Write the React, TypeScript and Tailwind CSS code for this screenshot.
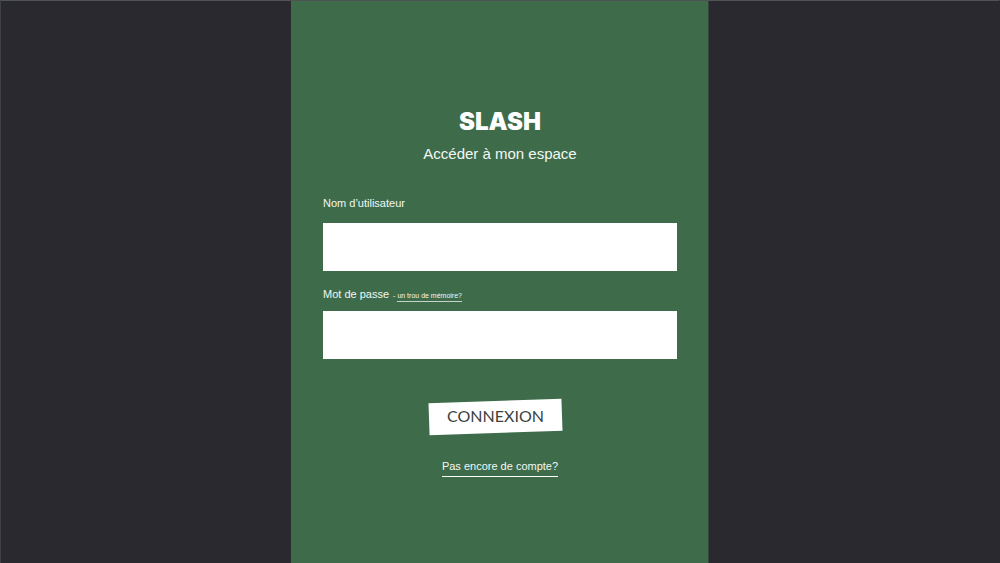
import type { ReactNode } from "react";

type FieldProps = {
  id: string;
  label: string;
  type: "text" | "password";
  className: string;
  children?: ReactNode;
};

function Field({ id, label, type, className, children }: FieldProps) {
  return (
    <div className={`flex flex-col ${className}`}>
      <div className="flex h-4 items-baseline gap-1 leading-4">
        <label htmlFor={id} className="text-[11px]">
          {label}
        </label>
        {children}
      </div>
      <input
        id={id}
        type={type}
        className="h-12 w-full bg-white px-3 text-sm text-[#2a2930] outline-none"
      />
    </div>
  );
}

export default function App() {
  return (
    <div className="flex min-h-screen justify-center border-x border-t border-t-[#4f5356] border-r-[#2a2930] border-l-[#3d4044] bg-[#2a2930] font-['Liberation_Sans',Arial,sans-serif] text-[#f3f7f4]">
      <main className="flex w-full max-w-[418px] flex-col border-x border-l-[#50615a] border-r-[#36453c] bg-[#3e6c4a] px-[31px] pt-[107px] pb-16">
        <h1 className="text-center font-['Inter',sans-serif] text-2xl leading-7 font-black text-white">
          SLASH
        </h1>
        <h2 className="mt-2 text-center text-[15px] leading-5">Accéder à mon espace</h2>
        <form className="mt-[31px] flex flex-col" onSubmit={(e) => e.preventDefault()}>
          <Field id="username" label="Nom d’utilisateur" type="text" className="gap-3" />
          <Field id="password" label="Mot de passe" type="password" className="mt-[15px] gap-[9px]">
            <span className="flex gap-[2px] text-[7px] leading-[10px]">
              <span>-</span>
              <a href="#memoire" className="border-b border-[#c5d3c9]">
                un trou de mémoire?
              </a>
            </span>
          </Field>
          <button
            type="submit"
            className="mt-[42px] mr-[9px] h-8 w-[133px] -rotate-2 self-center bg-white text-[#3c423e]"
          >
            <span className="block rotate-2 pb-[2px] font-['Lato',sans-serif] text-base leading-6">
              CONNEXION
            </span>
          </button>
        </form>
        <a
          href="#inscription"
          className="mt-[25px] self-center border-b border-white pb-[2px] text-[11px] leading-4"
        >
          Pas encore de compte?
        </a>
      </main>
    </div>
  );
}
